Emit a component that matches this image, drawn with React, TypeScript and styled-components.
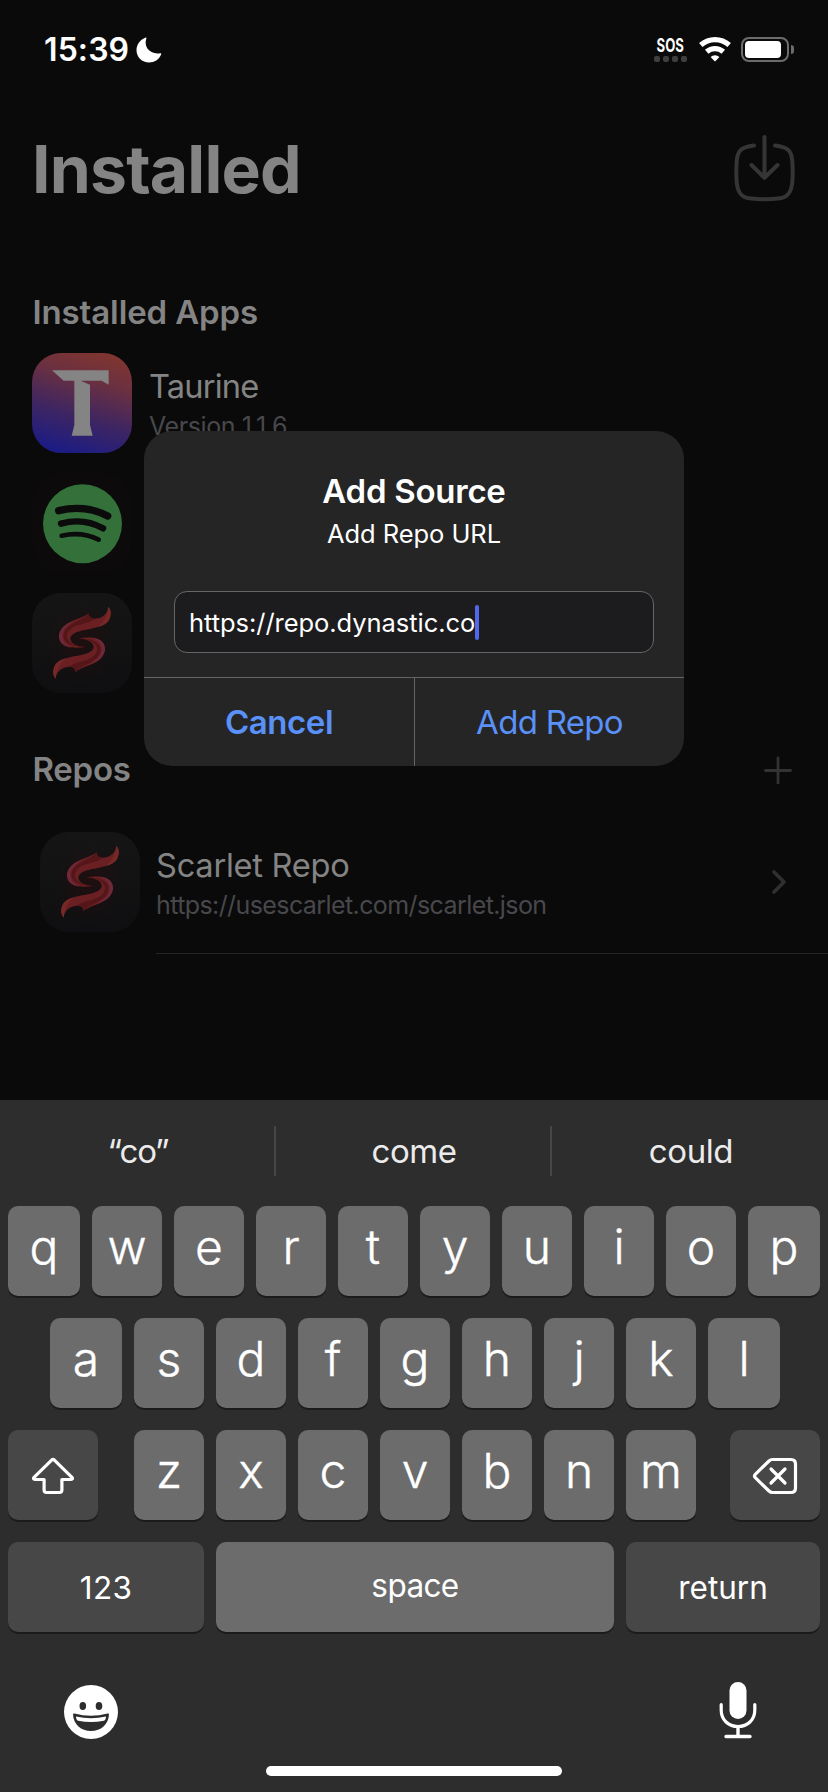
import React from 'react';
import styled, { createGlobalStyle } from 'styled-components';

const GlobalStyle = createGlobalStyle`
  *, *::before, *::after { box-sizing: border-box; }
  body { margin: 0; background: #0a0a0a; overflow: hidden; }
`;

const Screen = styled.main`
  position: relative;
  display: flex;
  flex-direction: column;
  width: 828px;
  height: 1792px;
  overflow: hidden;
  background: #0a0a0a;
  color: #848484;
  font-family: Inter, 'Liberation Sans', sans-serif;
  white-space: nowrap;
`;

/* ---------- status bar ---------- */

const StatusBar = styled.header`
  display: flex;
  align-items: center;
  height: 99px;
  padding: 0 34px 0 44px;
  color: #fff;
`;

const Clock = styled.span`
  font-size: 32px;
  font-weight: 600;
  letter-spacing: 0.1px;
  margin-right: 7px;
`;

const StatusIcons = styled.div`
  display: flex;
  align-items: center;
  margin-left: auto;
`;

const Carrier = styled.div`
  display: flex;
  flex-direction: column;
  align-items: center;
  width: 33px;
  margin-right: 12px;
`;

const CarrierText = styled.span`
  font-size: 18.5px;
  font-weight: 700;
  line-height: 17px;
  transform: scaleX(0.71);
`;

const SignalDots = styled.div`
  display: flex;
  justify-content: space-between;
  width: 33px;
  margin-top: 2px;
`;

const SignalDot = styled.i`
  width: 6px;
  height: 6px;
  border-radius: 2px;
  background: #3f3f3f;
`;

const Battery = styled.div`
  width: 48px;
  height: 25px;
  margin-left: 10px;
  padding: 2px;
  border: 2px solid #6c6c6c;
  border-radius: 8px;
`;

const BatteryLevel = styled.div`
  width: 36px;
  height: 17px;
  border-radius: 4px;
  background: #fff;
`;

const BatteryTip = styled.div`
  width: 3px;
  height: 9px;
  margin-left: 2px;
  border-radius: 0 3px 3px 0;
  background: #6c6c6c;
`;

/* ---------- page content ---------- */

const TitleRow = styled.div`
  display: flex;
  align-items: center;
  justify-content: space-between;
  height: 140px;
  padding: 0 33px 0 32px;
  svg { margin-bottom: 2px; }
`;

const PageTitle = styled.h1`
  margin: 0;
  font-size: 66px;
  font-weight: 700;
  letter-spacing: -0.81px;
`;

const SectionHeader = styled.div<{ $top: number; $height: number }>`
  display: flex;
  align-items: center;
  justify-content: space-between;
  height: ${(p) => p.$height}px;
  margin-top: ${(p) => p.$top}px;
  padding: 0 36px 0 32.5px;
  svg { margin-top: 2px; }
`;

const SectionTitle = styled.h2<{ $track: number }>`
  margin: 0;
  font-size: 33px;
  font-weight: 600;
  letter-spacing: ${(p) => p.$track}px;
`;

const AppList = styled.div`
  display: flex;
  flex-direction: column;
  gap: 20px;
  padding-left: 32px;
`;

const AppRow = styled.div`
  display: flex;
  gap: 17px;
  height: 100px;
`;

const RepoRow = styled.div`
  display: flex;
  gap: 16px;
  height: 121px;
  padding-left: 40px;
`;

const RepoBody = styled.div`
  display: flex;
  flex: 1;
  justify-content: space-between;
  align-items: flex-start;
  padding-right: 41px;
  height: 122px;
  border-bottom: 1px solid #242424;
`;

const Tile = styled.div<{ $bg: string }>`
  flex: none;
  width: 100px;
  height: 100px;
  border-radius: 29px;
  overflow: hidden;
  background: ${(p) => p.$bg};
  svg { display: block; }
`;

const Labels = styled.div<{ $top: number }>`
  display: flex;
  flex-direction: column;
  padding-top: ${(p) => p.$top}px;
`;

const Name = styled.span<{ $track: number }>`
  font-size: 32.6px;
  line-height: 39px;
  letter-spacing: ${(p) => p.$track}px;
`;

const Detail = styled.span<{ $track: number }>`
  font-size: 25px;
  line-height: 40px;
  letter-spacing: ${(p) => p.$track}px;
  color: #48484c;
`;

const ChevronSlot = styled.div`
  display: flex;
  align-items: center;
  height: 100px;
`;

/* ---------- alert ---------- */

const Alert = styled.section`
  position: absolute;
  left: 144px;
  top: 431px;
  display: flex;
  flex-direction: column;
  width: 540px;
  height: 335px;
  padding-top: 40px;
  border-radius: 28px;
  overflow: hidden;
  background: #252525;
  color: #fff;
  text-align: center;
`;

const AlertTitle = styled.h3`
  margin: 0;
  font-size: 33px;
  line-height: 40px;
  font-weight: 600;
  letter-spacing: -0.26px;
`;

const AlertMessage = styled.p`
  margin: 0;
  font-size: 25.5px;
  line-height: 45px;
  letter-spacing: -0.05px;
`;

const UrlField = styled.div`
  display: flex;
  align-items: center;
  height: 62px;
  margin: 35px 30px 24px;
  padding: 0 14px;
  border: 1px solid #666668;
  border-radius: 13px;
  background: #1c1c1e;
  font-size: 25.5px;
  letter-spacing: -0.05px;
`;

const Caret = styled.i`
  width: 4px;
  height: 35px;
  border-radius: 2px;
  background: #5069ec;
`;

const AlertActions = styled.div`
  display: grid;
  grid-template-columns: 1fr 1fr;
  flex: 1;
  border-top: 1px solid #646464;
`;

const AlertButton = styled.button<{ $bold?: boolean }>`
  border: 0;
  border-left: ${(p) => (p.$bold ? '0' : '1px solid #646464')};
  padding: 0;
  background: none;
  color: #5a91f8;
  font-family: inherit;
  font-size: 33px;
  font-weight: ${(p) => (p.$bold ? 600 : 400)};
  letter-spacing: ${(p) => (p.$bold ? -0.44 : -0.7)}px;
`;

/* ---------- keyboard ---------- */

const Keyboard = styled.section`
  display: flex;
  flex-direction: column;
  height: 692px;
  margin-top: auto;
  background: #2d2d2d;
  color: #fff;
`;

const Suggestions = styled.div`
  display: grid;
  grid-template-columns: 274px 2px 274px 2px 276px;
  align-items: center;
  height: 102px;
  margin-bottom: 4px;
`;

const Suggestion = styled.span<{ $track: number }>`
  padding-left: 2px;
  text-align: center;
  font-size: 33px;
  letter-spacing: ${(p) => p.$track}px;
  color: #ebebeb;
`;

const SuggestionDivider = styled.i`
  height: 50px;
  background: #464646;
`;

const KeyRows = styled.div`
  display: flex;
  flex-direction: column;
  gap: 22px;
`;

const KeyRow = styled.div<{ $left: number; $right: number }>`
  display: flex;
  justify-content: space-between;
  height: 90px;
  padding: 0 ${(p) => p.$right}px 0 ${(p) => p.$left}px;
`;

const LetterGroup = styled.div`
  display: flex;
  gap: 12px;
  margin-left: 2px;
`;

const Key = styled.div<{ $w: number; $dark?: boolean }>`
  display: flex;
  align-items: center;
  justify-content: center;
  flex: none;
  width: ${(p) => p.$w}px;
  height: 90px;
  border-radius: 10px;
  background: ${(p) => (p.$dark ? '#474747' : '#6c6c6c')};
  box-shadow: 0 2px 0 #1b1b1b;
  svg { margin-top: 2px; }
`;

const Letter = styled.span`
  padding-bottom: 9px;
  font-size: 48px;
  font-weight: 300;
  -webkit-text-stroke: 0.4px #fff;
`;

const KeyLabel = styled.span<{ $lift?: number; $track?: number }>`
  font-size: 31.5px;
  letter-spacing: ${(p) => p.$track ?? 0}px;
  padding-bottom: ${(p) => p.$lift ?? 0}px;
`;

const KeyboardFooter = styled.div`
  display: flex;
  align-items: flex-start;
  justify-content: space-between;
  height: 134px;
  padding: 50px 71px 0 64px;
`;

const EmojiSlot = styled.div`
  display: flex;
  padding-top: 3px;
`;

const HomeIndicator = styled.div`
  width: 296px;
  height: 10px;
  margin: 0 auto;
  border-radius: 5px;
  background: #fff;
`;

/* ---------- drawings ---------- */

const MoonIcon = () => (
  <svg width="26" height="26" viewBox="0 0 26 26">
    <path d="M9.2.7C10.2.2 10.700.8 10.300 1.800C7.600 9.600 13.500 17.800 24.200 16.200C25.100 16 25.500 16.700 25.100 17.500C23 22.600 18.500 25.500 13 25.500C6 25.500.5 20.100.5 13.200C.5 7.800 3.900 2.900 9.200.7Z" fill="#fff" />
  </svg>
);

const WifiIcon = () => (
  <svg width="32" height="25" viewBox="0 0 32 25">
    <g fill="none" stroke="#fff" strokeWidth="5.200">
      <path d="M1.800 8A21.500 21.500 0 0 1 30.200 8" />
      <path d="M7.700 14.800A12.500 12.500 0 0 1 24.300 14.800" />
    </g>
    <path d="M11.600 19.900A6.500 6.500 0 0 1 20.400 19.900L16.600 24Q16 24.500 15.400 24Z" fill="#fff" />
  </svg>
);

const DownloadIcon = () => (
  <svg width="61" height="67" viewBox="0 0 61 67" fill="none" stroke="#353535" strokeWidth="4" strokeLinecap="round" strokeLinejoin="round">
    <path d="M20 10.500C6 12 3.500 17 2.700 26C2.200 34 2.200 41 2.700 47C3.500 57 7 62 15 63.200C25 64.600 36 64.600 46 63.200C54 62 57.500 57 58.300 47C58.800 41 58.800 34 58.300 26C57.500 17 55 12 41 10.500" />
    <path d="M30.500 2V42.500M17.500 30L30.500 42.800L43.500 30" />
  </svg>
);

const PlusIcon = () => (
  <svg width="28" height="28" viewBox="0 0 28 28" stroke="#333" strokeWidth="2.800" strokeLinecap="round">
    <path d="M1.500 14.500H26.500M14 2V27" />
  </svg>
);

const ChevronIcon = () => (
  <svg width="16" height="26" viewBox="0 0 16 26" fill="none" stroke="#303030" strokeWidth="3.600" strokeLinecap="round" strokeLinejoin="round">
    <path d="M3 3L13 13L3 23" />
  </svg>
);

const TaurineArt = () => (
  <svg width="100" height="100" viewBox="0 0 300 300">
    <path d="M60 52H230V95L209 83H146L174 95V216L182 248H119L127 216V83H95Z" fill="#848484" />
  </svg>
);

const SpotifyArt = () => (
  <svg width="100" height="100" viewBox="0 0 300 300">
    <circle cx="151.500" cy="152" r="118.500" fill="#33703a" />
    <g fill="none" stroke="#0b0b0b" strokeLinecap="round">
      <path d="M80 113Q160 94 227 129" strokeWidth="22" />
      <path d="M87 152Q155 133 213 166" strokeWidth="19" />
      <path d="M89 188Q150 175 200 200" strokeWidth="14" />
    </g>
  </svg>
);

const ScarletRibbon = () => (
  <>
    <path d="M190 20C199 30 200 45 192 60C184 76 160 81 135 87C105 92 80 98 76 113C75 130 93 138 121 141C88 146 62 143 50 130C38 116 41 92 60 76C82 60 114 54 131 40C131 52 140 57 152 56C172 54 188 42 190 20Z" fill="#6a2023" />
    <path d="M131 40C131 50 137 56 148 57C138 66 120 70 104 74C82 80 66 92 66 108C66 126 84 138 121 141C84 141 57 130 55 110C54 88 74 74 98 62C114 55 122 50 131 40Z" fill="#541619" />
    <path d="M90 61C74 66 62 73 54 82C38 98 39 118 50 130C57 138 70 142 82 143C66 138 52 126 52 108C52 88 68 74 90 61Z" fill="#6d283a" />
    <path d="M190 20C199 30 200 45 192 60C186 72 172 77 158 81C176 66 186 52 190 20Z" fill="#762826" />
  </>
);

const ScarletArt = () => (
  <svg width="100" height="100" viewBox="0 0 300 300">
    <defs>
      <radialGradient id="glow">
        <stop offset="0" stopColor="#35090c" stopOpacity="0.35" />
        <stop offset="1" stopColor="#35090c" stopOpacity="0" />
      </radialGradient>
    </defs>
    <ellipse cx="150" cy="150" rx="105" ry="125" fill="url(#glow)" />
    <g transform="translate(39 21)">
      <ScarletRibbon />
      <g transform="rotate(180 111 128)">
        <ScarletRibbon />
      </g>
    </g>
  </svg>
);

const ShiftIcon = () => (
  <svg width="44" height="38" viewBox="0 0 44 38" fill="none" stroke="#fff" strokeWidth="3.200" strokeLinejoin="round">
    <path d="M20.900 2.800Q22 1.800 23.100 2.800L41 20.300Q42.300 22.400 40 22.500H30.900V33Q30.900 35.500 28.400 35.500H15.600Q13.100 35.500 13.100 33V22.500H4Q1.700 22.400 3 20.300Z" />
  </svg>
);

const DeleteIcon = () => (
  <svg width="46" height="38" viewBox="0 0 46 38" fill="none" stroke="#fff" strokeWidth="3.200" strokeLinecap="round" strokeLinejoin="round">
    <path d="M20.500 2.500H39Q43.500 2.500 43.500 7V31Q43.500 35.500 39 35.500H20.500Q18.500 35.500 17 34L3.300 20.700Q1.700 19 3.300 17.300L17 4Q18.500 2.500 20.500 2.500Z" />
    <path d="M19 12L33 26M33 12L19 26" />
  </svg>
);

const EmojiIcon = () => (
  <svg width="54" height="54" viewBox="0 0 54 54">
    <circle cx="27" cy="27" r="27" fill="#fff" />
    <g fill="#2d2d2d">
      <ellipse cx="18.800" cy="21" rx="3.300" ry="3.900" />
      <ellipse cx="35" cy="21" rx="3.300" ry="3.900" />
      <path d="M9 29.500Q9.200 28.300 10.500 28.600Q27 33 43.500 28.600Q44.900 28.300 45 29.500C44.500 39.500 37 46 27 46C17 46 9.500 39.500 9 29.500Z" />
    </g>
    <path d="M12 31.500Q27 35 42 31.500C42 33.500 41.300 35.300 39.800 35.800Q27 38.200 14.200 35.800C12.700 35.300 12 33.500 12 31.500Z" fill="#fff" />
  </svg>
);

const MicIcon = () => (
  <svg width="38" height="58" viewBox="0 0 38 58" fill="none" stroke="#fff" strokeLinecap="round">
    <rect x="10.500" y="0" width="17" height="37" rx="8.500" fill="#fff" stroke="none" />
    <path d="M2.200 22.500V28C2.200 38 9.500 44.500 19 44.500C28.500 44.500 35.800 38 35.800 28V22.500" strokeWidth="3.200" />
    <path d="M19 45V54M7 54.500H31" strokeWidth="3.400" />
  </svg>
);

/* ---------- screen ---------- */

const letterWidth = (row: string, i: number) => (i === 0 || i === row.length - 1 ? 72 : 70);

const LetterRow = ({ letters, left, right }: { letters: string; left: number; right: number }) => (
  <KeyRow $left={left} $right={right}>
    {letters.split('').map((l, i) => (
      <Key key={l} $w={letterWidth(letters, i)}>
        <Letter>{l}</Letter>
      </Key>
    ))}
  </KeyRow>
);

const scarletBg = 'linear-gradient(180deg, #151515, #0f0f11)';

export default function App() {
  return (
    <Screen>
      <GlobalStyle />
      <StatusBar>
        <Clock>15:39</Clock>
        <MoonIcon />
        <StatusIcons>
          <Carrier>
            <CarrierText>SOS</CarrierText>
            <SignalDots>
              <SignalDot />
              <SignalDot />
              <SignalDot />
              <SignalDot />
            </SignalDots>
          </Carrier>
          <WifiIcon />
          <Battery>
            <BatteryLevel />
          </Battery>
          <BatteryTip />
        </StatusIcons>
      </StatusBar>

      <TitleRow>
        <PageTitle>Installed</PageTitle>
        <DownloadIcon />
      </TitleRow>

      <SectionHeader $top={32} $height={82}>
        <SectionTitle $track={-0.12}>Installed Apps</SectionTitle>
      </SectionHeader>
      <AppList>
        <AppRow>
          <Tile $bg="linear-gradient(197deg, #7f3531 8%, #6b3040 30%, #3d2563 62%, #1c1c84 92%)">
            <TaurineArt />
          </Tile>
          <Labels $top={14}>
            <Name $track={-0.8}>Taurine</Name>
            <Detail $track={-0.41}>Version 1.1.6</Detail>
          </Labels>
        </AppRow>
        <AppRow>
          <Tile $bg="#0c0a0b">
            <SpotifyArt />
          </Tile>
        </AppRow>
        <AppRow>
          <Tile $bg={scarletBg}>
            <ScarletArt />
          </Tile>
        </AppRow>
      </AppList>

      <SectionHeader $top={13} $height={126}>
        <SectionTitle $track={-0.25}>Repos</SectionTitle>
        <PlusIcon />
      </SectionHeader>
      <RepoRow>
        <Tile $bg={scarletBg}>
          <ScarletArt />
        </Tile>
        <RepoBody>
          <Labels $top={14}>
            <Name $track={-0.25}>Scarlet Repo</Name>
            <Detail $track={-0.59}>https://usescarlet.com/scarlet.json</Detail>
          </Labels>
          <ChevronSlot>
            <ChevronIcon />
          </ChevronSlot>
        </RepoBody>
      </RepoRow>

      <Keyboard>
        <Suggestions>
          <Suggestion $track={-1.2}>“co”</Suggestion>
          <SuggestionDivider />
          <Suggestion $track={-0.5}>come</Suggestion>
          <SuggestionDivider />
          <Suggestion $track={-0.4}>could</Suggestion>
        </Suggestions>
        <KeyRows>
          <LetterRow letters="qwertyuiop" left={8} right={8} />
          <LetterRow letters="asdfghjkl" left={50} right={48} />
          <KeyRow $left={8} $right={8}>
            <Key $w={90} $dark>
              <ShiftIcon />
            </Key>
            <LetterGroup>
              {'zxcvbnm'.split('').map((l) => (
                <Key key={l} $w={70}>
                  <Letter>{l}</Letter>
                </Key>
              ))}
            </LetterGroup>
            <Key $w={90} $dark>
              <DeleteIcon />
            </Key>
          </KeyRow>
          <KeyRow $left={8} $right={8}>
            <Key $w={196} $dark>
              <KeyLabel $track={0.3}>123</KeyLabel>
            </Key>
            <Key $w={398}>
              <KeyLabel $lift={4} $track={-0.6}>space</KeyLabel>
            </Key>
            <Key $w={194} $dark>
              <KeyLabel>return</KeyLabel>
            </Key>
          </KeyRow>
        </KeyRows>
        <KeyboardFooter>
          <EmojiSlot>
            <EmojiIcon />
          </EmojiSlot>
          <MicIcon />
        </KeyboardFooter>
        <HomeIndicator />
      </Keyboard>

      <Alert>
        <AlertTitle>Add Source</AlertTitle>
        <AlertMessage>Add Repo URL</AlertMessage>
        <UrlField>
          https://repo.dynastic.co
          <Caret />
        </UrlField>
        <AlertActions>
          <AlertButton $bold>Cancel</AlertButton>
          <AlertButton>Add Repo</AlertButton>
        </AlertActions>
      </Alert>
    </Screen>
  );
}
